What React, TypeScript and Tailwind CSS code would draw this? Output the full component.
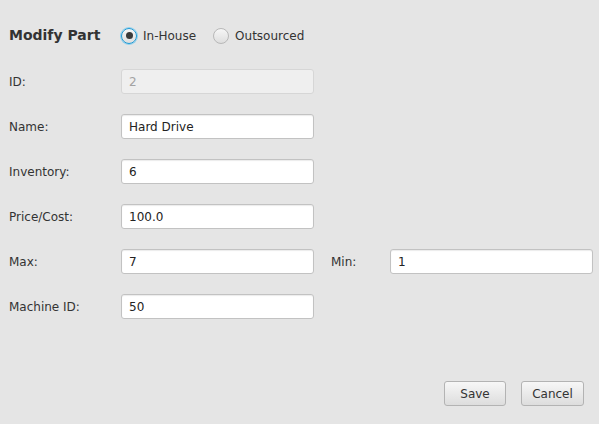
import { useState } from 'react';

const font = { fontFamily: '"DejaVu Sans", "Liberation Sans", sans-serif' };

function Field({ value, disabled = false, width = 'w-[193px]' }: { value: string; disabled?: boolean; width?: string }) {
  return (
    <div
      className={`${width} shrink-0 h-[25px] flex items-center px-[7px] rounded-[3px] border text-[12px] ${
        disabled
          ? 'bg-[#efefef] border-[#d6d6d6] text-[#a3a3a3]'
          : 'bg-white border-[#c2c2c2] text-[#222] shadow-[inset_0_1px_1px_rgba(0,0,0,0.08)]'
      }`}
    >
      {value}
    </div>
  );
}

function Row({ label, children }: { label: string; children: React.ReactNode }) {
  return (
    <div className="flex items-center h-[25px]">
      <span className="w-[112px] shrink-0 text-[12px] text-[#333]">{label}</span>
      {children}
    </div>
  );
}

function Radio({ checked, label, onClick }: { checked: boolean; label: string; onClick: () => void }) {
  return (
    <button onClick={onClick} className="flex items-center gap-[6px] text-[12px] text-[#333]">
      <span
        className={`w-[16px] h-[16px] rounded-full flex items-center justify-center bg-gradient-to-b from-[#f6f6f6] to-[#dedede] border ${
          checked ? 'border-[#1d9ad6] shadow-[0_0_0_1px_#8fd0ee]' : 'border-[#b8b8b8]'
        }`}
      >
        {checked && <span className="w-[7px] h-[7px] rounded-full bg-[#3a3a3a]" />}
      </span>
      {label}
    </button>
  );
}

export default function App() {
  const [inHouse, setInHouse] = useState(true);

  return (
    <div className="w-[599px] h-[424px] bg-[#e5e5e5] flex flex-col pl-[9px]" style={font}>
      {/* Header */}
      <div className="flex items-center h-[25px] mt-[23px]">
        <span className="w-[112px] text-[14px] font-bold text-[#333]">Modify Part</span>
        <div className="flex items-center gap-[17px]">
          <Radio checked={inHouse} label="In-House" onClick={() => setInHouse(true)} />
          <Radio checked={!inHouse} label="Outsourced" onClick={() => setInHouse(false)} />
        </div>
      </div>

      {/* Form rows */}
      <div className="flex flex-col gap-[20px] mt-[21px]">
        <Row label="ID:">
          <Field value="2" disabled />
        </Row>
        <Row label="Name:">
          <Field value="Hard Drive" />
        </Row>
        <Row label="Inventory:">
          <Field value="6" />
        </Row>
        <Row label="Price/Cost:">
          <Field value="100.0" />
        </Row>
        <Row label="Max:">
          <Field value="7" />
          <span className="ml-[17px] w-[59px] shrink-0 text-[12px] text-[#333]">Min:</span>
          <Field value="1" width="w-[203px]" />
        </Row>
        <Row label="Machine ID:">
          <Field value="50" />
        </Row>
      </div>

      {/* Actions */}
      <div className="flex justify-end gap-[15px] mt-auto mb-[18px] pr-[15px]">
        <button className="w-[62px] h-[25px] rounded-[3px] border border-[#b3b3b3] bg-gradient-to-b from-[#f7f7f7] to-[#dddddd] text-[12px] text-[#333]">
          Save
        </button>
        <button className="w-[63px] h-[25px] rounded-[3px] border border-[#b3b3b3] bg-gradient-to-b from-[#f7f7f7] to-[#dddddd] text-[12px] text-[#333]">
          Cancel
        </button>
      </div>
    </div>
  );
}
